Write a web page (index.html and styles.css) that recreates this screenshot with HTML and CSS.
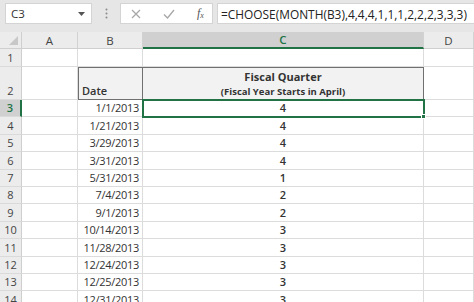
FILE: index.html
```html
<!DOCTYPE html>
<html lang="en">
<head>
    <meta charset="UTF-8">
    <title>Fiscal Quarter - Excel</title>
    <link rel="stylesheet" href="styles.css">
</head>
<body>
    <div class="formula-bar">
        <div class="name-box">
            <span>C3</span>
            <svg class="caret" width="7" height="4" viewBox="0 0 7 4"><path d="M0 0h7L3.5 4z" fill="#555"/></svg>
        </div>
        <div class="grip">
            <svg width="3" height="11" viewBox="0 0 3 11"><circle cx="1.5" cy="1.5" r="1" fill="#8a8a8a"/><circle cx="1.5" cy="5.5" r="1" fill="#8a8a8a"/><circle cx="1.5" cy="9.5" r="1" fill="#8a8a8a"/></svg>
        </div>
        <div class="fx-buttons">
            <svg width="10" height="10" viewBox="0 0 10 10"><path d="M1 1l8 8M9 1l-8 8" stroke="#a6a6a6" stroke-width="1.2" fill="none"/></svg>
            <svg width="12" height="10" viewBox="0 0 12 10"><path d="M1 5.5l3.5 3.5L11 1" stroke="#a6a6a6" stroke-width="1.3" fill="none"/></svg>
            <span class="fx">f<sub>x</sub></span>
        </div>
        <div class="formula">=CHOOSE(MONTH(B3),4,4,4,1,1,1,2,2,2,3,3,3)</div>
    </div>

    <div class="sheet">
        <!-- column headers -->
        <div class="corner"></div>
        <div class="col-head">A</div>
        <div class="col-head">B</div>
        <div class="col-head selected">C</div>
        <div class="col-head">D</div>

        <!-- row 1 -->
        <div class="row-head">1</div>
        <div class="cell"></div>
        <div class="cell"></div>
        <div class="cell"></div>
        <div class="cell"></div>

        <!-- row 2 -->
        <div class="row-head">2</div>
        <div class="cell"></div>
        <div class="cell title date-title">Date</div>
        <div class="cell title quarter-title">
            <div class="t1">Fiscal Quarter</div>
            <div class="t2">(Fiscal Year Starts in April)</div>
        </div>
        <div class="cell"></div>

        <!-- row 3 -->
        <div class="row-head selected">3</div>
        <div class="cell"></div>
        <div class="cell date">1/1/2013</div>
        <div class="cell num active">4</div>
        <div class="cell"></div>

        <div class="row-head">4</div><div class="cell"></div><div class="cell date">1/21/2013</div><div class="cell num">4</div><div class="cell"></div>
        <div class="row-head">5</div><div class="cell"></div><div class="cell date">3/29/2013</div><div class="cell num">4</div><div class="cell"></div>
        <div class="row-head">6</div><div class="cell"></div><div class="cell date">3/31/2013</div><div class="cell num">4</div><div class="cell"></div>
        <div class="row-head">7</div><div class="cell"></div><div class="cell date">5/31/2013</div><div class="cell num">1</div><div class="cell"></div>
        <div class="row-head">8</div><div class="cell"></div><div class="cell date">7/4/2013</div><div class="cell num">2</div><div class="cell"></div>
        <div class="row-head">9</div><div class="cell"></div><div class="cell date">9/1/2013</div><div class="cell num">2</div><div class="cell"></div>
        <div class="row-head">10</div><div class="cell"></div><div class="cell date">10/14/2013</div><div class="cell num">3</div><div class="cell"></div>
        <div class="row-head">11</div><div class="cell"></div><div class="cell date">11/28/2013</div><div class="cell num">3</div><div class="cell"></div>
        <div class="row-head">12</div><div class="cell"></div><div class="cell date">12/24/2013</div><div class="cell num">3</div><div class="cell"></div>
        <div class="row-head">13</div><div class="cell"></div><div class="cell date">12/25/2013</div><div class="cell num">3</div><div class="cell"></div>
        <div class="row-head">14</div><div class="cell"></div><div class="cell date">12/31/2013</div><div class="cell num">3</div><div class="cell"></div>
    </div>
</body>
</html>
```

FILE: styles.css
```css
body {
    margin: 0;
    width: 474px;
    height: 302px;
    overflow: hidden;
    background: #fff;
    font-family: "Open Sans", "Liberation Sans", sans-serif;
}
.formula-bar {
    display: flex;
    align-items: stretch;
    height: 21px;
    padding: 3px 0 8px 5px;
    background: #e6e6e6;
}
.name-box {
    width: 87px;
    box-sizing: border-box;
    background: #fff;
    border: 1px solid #d4d4d4;
    display: flex;
    align-items: center;
    justify-content: space-between;
    padding: 0 6px 0 5px;
    font-size: 11.5px;
    color: #333;
}
.grip {
    width: 28px;
    display: flex;
    align-items: center;
    justify-content: center;
}
.fx-buttons {
    width: 93px;
    box-sizing: border-box;
    background: #fff;
    border: 1px solid #d4d4d4;
    display: flex;
    align-items: center;
    padding: 0 0 0 10px;
    gap: 22px;
}
.fx {
    font-family: "Liberation Serif", serif;
    font-style: italic;
    font-size: 12px;
    color: #555;
}
.fx sub {
    font-size: 8px;
    vertical-align: -1px;
}
.formula {
    flex: 1;
    margin-left: 4px;
    background: #fff;
    border: 1px solid #d4d4d4;
    border-right: none;
    display: flex;
    align-items: center;
    padding-left: 3px;
    font-size: 11.9px;
    color: #222;
    white-space: nowrap;
}
.sheet {
    display: grid;
    grid-template-columns: 22px 56px 65px 281px 1fr;
    grid-template-rows: 17px 18px 33px repeat(12, 17.4px);
    font-size: 11px;
}
.sheet > div {
    box-sizing: border-box;
}
.corner {
    background: #ececec;
    border-right: 1px solid #cfcfcf;
    border-bottom: 1px solid #cfcfcf;
    position: relative;
}
.corner::after {
    content: "";
    position: absolute;
    right: 3px;
    bottom: 3px;
    border-left: 9px solid transparent;
    border-bottom: 9px solid #c8c8c8;
}
.col-head {
    background: #ececec;
    border-right: 1px solid #d2d2d2;
    border-bottom: 1px solid #cfcfcf;
    display: flex;
    align-items: center;
    justify-content: center;
    color: #444;
    font-size: 11.5px;
}
.col-head.selected {
    background: #d0d0d0;
    border-bottom: 2px solid #217346;
    color: #217346;
    font-weight: 600;
}
.row-head {
    background: #ececec;
    border-right: 1px solid #cfcfcf;
    border-bottom: 1px solid #dadada;
    display: flex;
    align-items: flex-end;
    justify-content: center;
    padding-bottom: 1px;
    color: #444;
}
.row-head.selected {
    background: #d0d0d0;
    border-right: 2px solid #217346;
    color: #217346;
    font-weight: 600;
}
.cell {
    border-right: 1px solid #dcdcdc;
    border-bottom: 1px solid #dcdcdc;
    display: flex;
    align-items: flex-end;
    padding: 0 3px 1px;
    color: #333;
    white-space: nowrap;
}
.date {
    justify-content: flex-end;
    letter-spacing: -0.3px;
}
.num {
    justify-content: center;
    font-weight: 600;
    color: #333;
}
.title {
    background: #f2f2f2;
    border: 1px solid #707070;
    color: #333;
}
.date-title {
    font-weight: 600;
}
.quarter-title {
    border-left: none;
    flex-direction: column;
    align-items: center;
    justify-content: center;
    font-weight: 700;
    padding: 0;
}
.t1 {
    font-size: 11px;
    line-height: 16px;
}
.t2 {
    font-size: 9.5px;
    line-height: 14px;
}
.active {
    outline: 2px solid #217346;
    outline-offset: -1px;
    position: relative;
}
.active::after {
    content: "";
    position: absolute;
    right: -3px;
    bottom: -3px;
    width: 5px;
    height: 5px;
    background: #217346;
    border: 1px solid #fff;
    box-sizing: border-box;
}
```
